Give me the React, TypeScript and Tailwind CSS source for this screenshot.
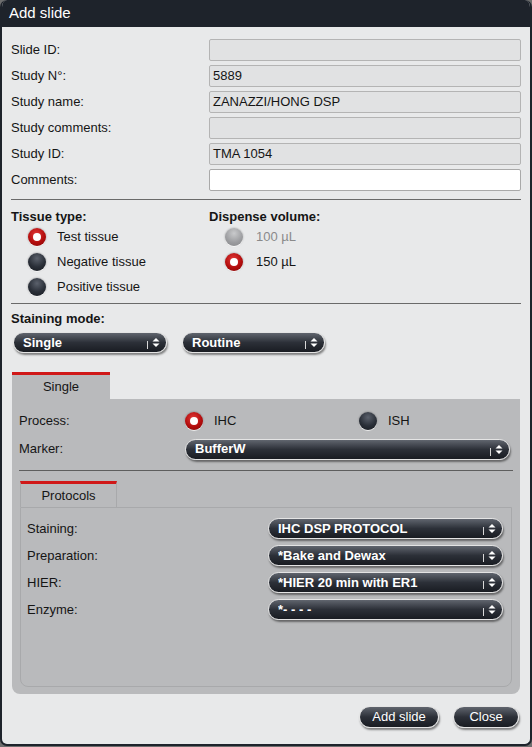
import React from 'react';

const FONT = "font-['Liberation_Sans',Arial,sans-serif]";

const Radio: React.FC<{ state: 'on' | 'off' | 'disabled' }> = ({ state }) => {
  if (state === 'on') {
    return (
      <span className="w-[18px] h-[18px] rounded-full flex items-center justify-center bg-[radial-gradient(circle_at_45%_35%,#e23a3a,#b30d0d_55%,#7d0606)] shadow-[0_1px_1px_rgba(255,255,255,0.9),0_0_2px_rgba(0,0,0,0.45)] flex-shrink-0">
        <span className="w-[8px] h-[8px] rounded-full bg-white" />
      </span>
    );
  }
  if (state === 'disabled') {
    return (
      <span className="w-[18px] h-[18px] rounded-full bg-[radial-gradient(circle_at_50%_30%,#c9cacc,#9a9b9e_60%,#86878a)] shadow-[0_1px_1px_rgba(255,255,255,0.9),0_0_2px_rgba(0,0,0,0.35)] flex-shrink-0" />
    );
  }
  return (
    <span className="w-[18px] h-[18px] rounded-full bg-[radial-gradient(circle_at_50%_30%,#5b616c,#2a2f38_55%,#171a20)] shadow-[0_1px_1px_rgba(255,255,255,0.9),0_0_2px_rgba(0,0,0,0.45)] flex-shrink-0" />
  );
};

const Select: React.FC<{ value: string; className?: string }> = ({ value, className = '' }) => (
  <div
    className={`relative h-[21px] rounded-full border border-[#e4e4e4] bg-[linear-gradient(#60656e,#2c3038_50%,#191c22)] shadow-[1px_2px_2px_rgba(0,0,0,0.45)] flex items-center text-white text-[13px] font-bold pl-[9px] ${className}`}
  >
    <span className="truncate pr-[26px]">{value}</span>
    <span className="absolute right-[18px] top-[8px] w-px h-[8px] bg-[#d8d8d8]" />
    <svg className="absolute right-[6px] top-[4px]" width="8" height="11" viewBox="0 0 8 11">
      <path d="M4 1 L7.5 4.5 L0.5 4.5 Z" fill="#fff" />
      <path d="M4 10 L7.5 6.5 L0.5 6.5 Z" fill="#fff" />
    </svg>
  </div>
);

const Button: React.FC<{ label: string; className?: string }> = ({ label, className = '' }) => (
  <button
    className={`h-[22px] rounded-full border border-[#e4e4e4] bg-[linear-gradient(#60656e,#2c3038_50%,#191c22)] shadow-[1px_2px_2px_rgba(0,0,0,0.45)] text-white text-[13px] flex items-center justify-center ${className}`}
  >
    {label}
  </button>
);

const fields: { label: string; value: string; white?: boolean }[] = [
  { label: 'Slide ID:', value: '' },
  { label: 'Study N°:', value: '5889' },
  { label: 'Study name:', value: 'ZANAZZI/HONG DSP' },
  { label: 'Study comments:', value: '' },
  { label: 'Study ID:', value: 'TMA 1054' },
  { label: 'Comments:', value: '', white: true },
];

const protocols = [
  { label: 'Staining:', value: 'IHC DSP PROTOCOL' },
  { label: 'Preparation:', value: '*Bake and Dewax' },
  { label: 'HIER:', value: '*HIER 20 min with ER1' },
  { label: 'Enzyme:', value: '*- - - -' },
];

export default function App() {
  return (
    <div className={`w-[532px] h-[747px] bg-[#6e6e6e] ${FONT} text-[13px] text-[#151515]`}>
      <div className="h-[746px] rounded-[7px] border-2 border-t-0 border-[#1e232b] bg-[#e8e9ea] flex flex-col overflow-hidden">
        <div className="h-[27px] bg-[#1e232b] text-white text-[15px] pl-[7px] flex items-center flex-shrink-0">
          Add slide
        </div>

        <div className="px-[9px] pt-[12px] flex flex-col">
          <div className="flex flex-col gap-[4px]">
            {fields.map((f) => (
              <div key={f.label} className="flex items-center h-[22px]">
                <span className="w-[198px]">{f.label}</span>
                <div
                  className={`flex-1 h-[22px] rounded-[2px] border px-[3px] flex items-center ${
                    f.white ? 'bg-white border-[#a9a9a9]' : 'bg-[#e1e2e3] border-[#b4b4b4]'
                  }`}
                >
                  {f.value}
                </div>
              </div>
            ))}
          </div>

          <div className="mt-[8px] h-px bg-[#6a6a6a]" />

          <div className="flex mt-[9px]">
            <div className="w-[198px] flex flex-col">
              <span className="font-bold leading-[15px]">Tissue type:</span>
              <div className="flex flex-col ml-[17px]">
                {[
                  ['Test tissue', 'on'],
                  ['Negative tissue', 'off'],
                  ['Positive tissue', 'off'],
                ].map(([t, s]) => (
                  <div key={t} className="h-[25px] flex items-center gap-[11px]">
                    <Radio state={s as 'on' | 'off'} />
                    <span>{t}</span>
                  </div>
                ))}
              </div>
            </div>
            <div className="flex flex-col">
              <span className="font-bold leading-[15px]">Dispense volume:</span>
              <div className="flex flex-col ml-[16px]">
                <div className="h-[25px] flex items-center gap-[13px]">
                  <Radio state="disabled" />
                  <span className="text-[#8a8a8a]">100 µL</span>
                </div>
                <div className="h-[25px] flex items-center gap-[13px]">
                  <Radio state="on" />
                  <span>150 µL</span>
                </div>
              </div>
            </div>
          </div>

          <div className="mt-[4px] h-px bg-[#6a6a6a]" />

          <span className="mt-[7px] font-bold leading-[15px]">Staining mode:</span>
          <div className="flex mt-[6px] ml-[2px] gap-[15px]">
            <Select value="Single" className="w-[154px]" />
            <Select value="Routine" className="w-[143px]" />
          </div>

          <div className="mt-[19px] mx-[1px] flex flex-col">
            <div className="w-[98px] h-[27px] border-t-[3px] border-[#d01818] bg-[#b9babc] flex items-center justify-center">
              Single
            </div>
            <div className="h-[295px] bg-[#b9babc] rounded-b-[8px] flex flex-col pt-[11px]">
              <div className="flex flex-col gap-[6px] pl-[7px] pr-[10px]">
                <div className="h-[22px] flex items-center">
                  <span className="w-[166px]">Process:</span>
                  <div className="w-[174px] flex items-center gap-[11px]">
                    <Radio state="on" />
                    <span>IHC</span>
                  </div>
                  <div className="flex items-center gap-[11px]">
                    <Radio state="off" />
                    <span>ISH</span>
                  </div>
                </div>
                <div className="h-[22px] flex items-center">
                  <span className="w-[166px]">Marker:</span>
                  <Select value="BufferW" className="flex-1" />
                </div>
              </div>

              <div className="mt-[10px] mx-[7px] h-px bg-[#5e5e5e]" />

              <div className="mt-[10px] mx-[8px] flex flex-col">
                <div className="w-[97px] h-[26px] border-t-[3px] border-[#d01818] bg-[#b9babc] border-x border-x-[#a8a9ab] flex items-center justify-center">
                  Protocols
                </div>
                <div className="h-[180px] border border-[#a8a9ab] rounded-b-[8px] bg-[#b9babc] flex flex-col gap-[6px] pt-[10px] pl-[6px] pr-[8px]">
                  {protocols.map((p) => (
                    <div key={p.label} className="h-[21px] flex items-center">
                      <span className="w-[241px]">{p.label}</span>
                      <Select value={p.value} className="flex-1" />
                    </div>
                  ))}
                </div>
              </div>
            </div>
          </div>

          <div className="mt-[12px] flex justify-end gap-[14px] mr-[2px]">
            <Button label="Add slide" className="w-[80px]" />
            <Button label="Close" className="w-[66px]" />
          </div>
        </div>
      </div>
    </div>
  );
}
